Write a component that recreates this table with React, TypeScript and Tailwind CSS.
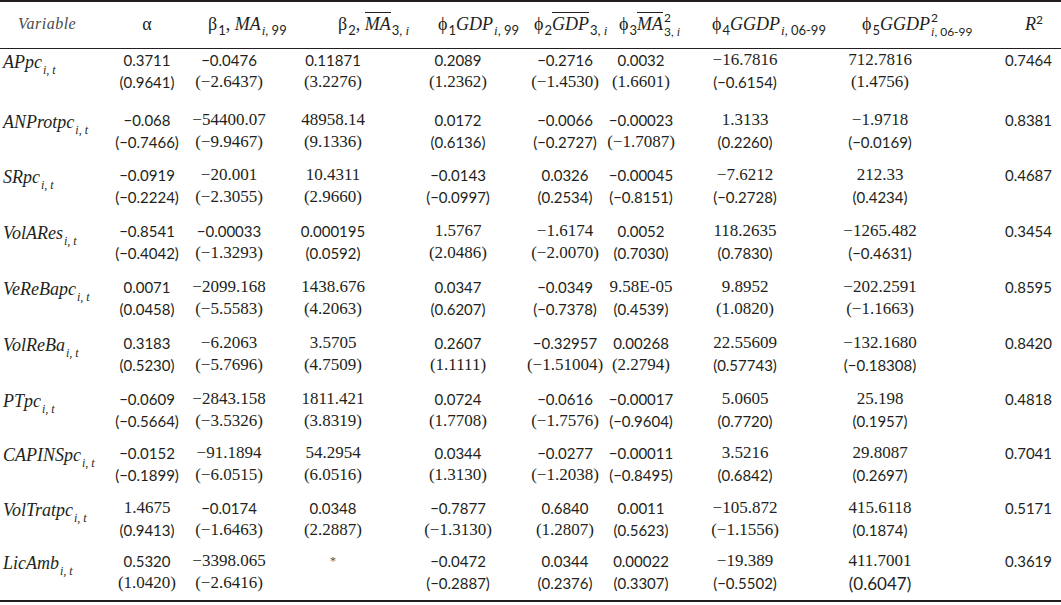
import React from "react";

const serif = "font-['Liberation_Serif','Times_New_Roman',serif]";
const sans = "font-['Lato','Open_Sans',sans-serif]";

interface Row {
  name: string;
  cells: [string, string][];
  r2: string;
  h: string;
}

const rows: Row[] = [
  {
    name: "APpc",
    h: "h-[60px]",
    r2: "0.7464",
    cells: [
      ["0.3711", "(0.9641)"],
      ["−0.0476", "(−2.6437)"],
      ["0.11871", "(3.2276)"],
      ["0.2089", "(1.2362)"],
      ["−0.2716", "(−1.4530)"],
      ["0.0032", "(1.6601)"],
      ["−16.7816", "(−0.6154)"],
      ["712.7816", "(1.4756)"],
    ],
  },
  {
    name: "ANProtpc",
    h: "h-[55px]",
    r2: "0.8381",
    cells: [
      ["−0.068", "(−0.7466)"],
      ["−54400.07", "(−9.9467)"],
      ["48958.14", "(9.1336)"],
      ["0.0172", "(0.6136)"],
      ["−0.0066", "(−0.2727)"],
      ["−0.00023", "(−1.7087)"],
      ["1.3133", "(0.2260)"],
      ["−1.9718", "(−0.0169)"],
    ],
  },
  {
    name: "SRpc",
    h: "h-[56px]",
    r2: "0.4687",
    cells: [
      ["−0.0919", "(−0.2224)"],
      ["−20.001", "(−2.3055)"],
      ["10.4311", "(2.9660)"],
      ["−0.0143", "(−0.0997)"],
      ["0.0326", "(0.2534)"],
      ["−0.00045", "(−0.8151)"],
      ["−7.6212", "(−0.2728)"],
      ["212.33", "(0.4234)"],
    ],
  },
  {
    name: "VolARes",
    h: "h-[56px]",
    r2: "0.3454",
    cells: [
      ["−0.8541", "(−0.4042)"],
      ["−0.00033", "(−1.3293)"],
      ["0.000195", "(0.0592)"],
      ["1.5767", "(2.0486)"],
      ["−1.6174", "(−2.0070)"],
      ["0.0052", "(0.7030)"],
      ["118.2635", "(0.7830)"],
      ["−1265.482", "(−0.4631)"],
    ],
  },
  {
    name: "VeReBapc",
    h: "h-[56px]",
    r2: "0.8595",
    cells: [
      ["0.0071", "(0.0458)"],
      ["−2099.168", "(−5.5583)"],
      ["1438.676", "(4.2063)"],
      ["0.0347", "(0.6207)"],
      ["−0.0349", "(−0.7378)"],
      ["9.58E-05", "(0.4539)"],
      ["9.8952", "(1.0820)"],
      ["−202.2591", "(−1.1663)"],
    ],
  },
  {
    name: "VolReBa",
    h: "h-[56px]",
    r2: "0.8420",
    cells: [
      ["0.3183", "(0.5230)"],
      ["−6.2063", "(−5.7696)"],
      ["3.5705", "(4.7509)"],
      ["0.2607", "(1.1111)"],
      ["−0.32957", "(−1.51004)"],
      ["0.00268", "(2.2794)"],
      ["22.55609", "(0.57743)"],
      ["−132.1680", "(−0.18308)"],
    ],
  },
  {
    name: "PTpc",
    h: "h-[54px]",
    r2: "0.4818",
    cells: [
      ["−0.0609", "(−0.5664)"],
      ["−2843.158", "(−3.5326)"],
      ["1811.421", "(3.8319)"],
      ["0.0724", "(1.7708)"],
      ["−0.0616", "(−1.7576)"],
      ["−0.00017", "(−0.9604)"],
      ["5.0605", "(0.7720)"],
      ["25.198", "(0.1957)"],
    ],
  },
  {
    name: "CAPINSpc",
    h: "h-[55px]",
    r2: "0.7041",
    cells: [
      ["−0.0152", "(−0.1899)"],
      ["−91.1894", "(−6.0515)"],
      ["54.2954", "(6.0516)"],
      ["0.0344", "(1.3130)"],
      ["−0.0277", "(−1.2038)"],
      ["−0.00011", "(−0.8495)"],
      ["3.5216", "(0.6842)"],
      ["29.8087", "(0.2697)"],
    ],
  },
  {
    name: "VolTratpc",
    h: "h-[53px]",
    r2: "0.5171",
    cells: [
      ["1.4675", "(0.9413)"],
      ["−0.0174", "(−1.6463)"],
      ["0.0348", "(2.2887)"],
      ["−0.7877", "(−1.3130)"],
      ["0.6840", "(1.2807)"],
      ["0.0011", "(0.5623)"],
      ["−105.872", "(−1.1556)"],
      ["415.6118", "(0.1874)"],
    ],
  },
  {
    name: "LicAmb",
    h: "h-[50px]",
    r2: "0.3619",
    cells: [
      ["0.5320", "(1.0420)"],
      ["−3398.065", "(−2.6416)"],
      ["*", ""],
      ["−0.0472", "(−0.2887)"],
      ["0.0344", "(0.2376)"],
      ["0.00022", "(0.3307)"],
      ["−19.389", "(−0.5502)"],
      ["411.7001", "(0.6047)"],
    ],
  },
];

const cols =
  "grid grid-cols-[112px_70px_94px_114px_136px_78px_74px_134px_136px_1fr]";

// figures with a leading zero come out in the sans cut, the rest in the serif
const numFont = (s: string) =>
  /^\(?−?0/.test(s) ? `${sans} text-[15px]` : `${serif} text-[17px]`;

function Sub({ children }: { children: React.ReactNode }) {
  return (
    <span className="text-[13px] relative top-[5px] ml-[1px]">{children}</span>
  );
}

function Stack({ top, bottom }: { top: string; bottom: React.ReactNode }) {
  return (
    <span className="inline-flex flex-col text-[12px] leading-[14px] align-[8px] ml-[1px]">
      <span className={sans}>{top}</span>
      <span>{bottom}</span>
    </span>
  );
}

function Bar({ children }: { children: React.ReactNode }) {
  return <span className="border-t border-[#231f20] pt-[1px]">{children}</span>;
}

function Greek({ g, n }: { g: string; n: string }) {
  return (
    <span className={serif}>
      {g}
      <Sub>
        <span className={sans}>{n}</span>
      </Sub>
    </span>
  );
}

function Header() {
  return (
    <div className={`${cols} h-[47px] items-center border-b border-[#231f20] text-[18px] pb-[2px]`}>
      <div className={`${serif} italic text-[16px] text-[#4a4a4a] pl-[18px] tracking-[0.5px]`}>
        Variable
      </div>
      <div className={`${serif} text-center`}>α</div>
      <div className="whitespace-nowrap pl-[26px]">
        <Greek g="β" n="1" />
        <span className={serif}>, </span>
        <span className={`${serif} italic`}>MA</span>
        <Sub>
          <i className={serif}>i</i>
          <span className={sans}>, 99</span>
        </Sub>
      </div>
      <div className="whitespace-nowrap pl-[62px]">
        <Greek g="β" n="2" />
        <span className={serif}>, </span>
        <span className={`${serif} italic`}>
          <Bar>MA</Bar>
        </span>
        <Sub>
          <span className={sans}>3, </span>
          <i className={serif}>i</i>
        </Sub>
      </div>
      <div className="whitespace-nowrap pl-[48px]">
        <Greek g="ϕ" n="1" />
        <span className={`${serif} italic`}>GDP</span>
        <Sub>
          <i className={serif}>i</i>
          <span className={sans}>, 99</span>
        </Sub>
      </div>
      <div className="whitespace-nowrap pl-[8px]">
        <Greek g="ϕ" n="2" />
        <span className={`${serif} italic`}>
          <Bar>GDP</Bar>
        </span>
        <Sub>
          <span className={sans}>3, </span>
          <i className={serif}>i</i>
        </Sub>
      </div>
      <div className="whitespace-nowrap pl-[15px]">
        <Greek g="ϕ" n="3" />
        <span className={`${serif} italic`}>
          <Bar>MA</Bar>
        </span>
        <Stack
          top="2"
          bottom={
            <>
              <span className={sans}>3, </span>
              <i className={serif}>i</i>
            </>
          }
        />
      </div>
      <div className="whitespace-nowrap pl-[34px]">
        <Greek g="ϕ" n="4" />
        <span className={`${serif} italic`}>GGDP</span>
        <Sub>
          <i className={serif}>i</i>
          <span className={sans}>, 06-99</span>
        </Sub>
      </div>
      <div className="whitespace-nowrap pl-[50px]">
        <Greek g="ϕ" n="5" />
        <span className={`${serif} italic`}>GGDP</span>
        <Stack
          top="2"
          bottom={
            <>
              <i className={serif}>i</i>
              <span className={sans}>, 06-99</span>
            </>
          }
        />
      </div>
      <div className={`${serif} italic text-right pr-[18px]`}>
        R<sup className={`${sans} not-italic text-[12px]`}>2</sup>
      </div>
    </div>
  );
}

export default function App() {
  return (
    <div className="w-[1061px] h-[605px] bg-white text-[#231f20] overflow-hidden">
      <div className="border-t-2 border-[#231f20]">
        <Header />
        {rows.map((row) => (
          <div key={row.name} className={`${cols} ${row.h} leading-[22px]`}>
            <div className={`${serif} italic text-[18px] leading-[24px] pl-[3px] pt-[1px] whitespace-nowrap`}>
              {row.name}
              <span className="text-[12px] relative top-[6px] ml-[1px]">i, t</span>
            </div>
            {row.cells.map(([v, p], i) => (
              <div key={i} className="flex flex-col items-center whitespace-nowrap">
                <span className={v === "*" ? `${serif} text-[12px] text-[#555]` : numFont(v)}>{v}</span>
                <span
                  className={
                    row.name === "LicAmb" && i === 7
                      ? `${sans} text-[17px] leading-[24px]`
                      : numFont(p)
                  }>
                  {p}
                </span>
              </div>
            ))}
            <div className={`${numFont(row.r2)} text-right pr-[9px]`}>{row.r2}</div>
          </div>
        ))}
        <div className="border-t-2 border-[#231f20]" />
      </div>
    </div>
  );
}
